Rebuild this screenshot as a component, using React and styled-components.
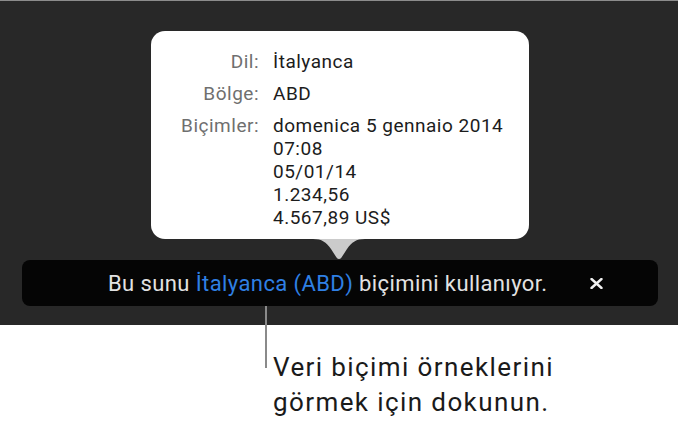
import styled, { createGlobalStyle } from "styled-components";

const GlobalStyle = createGlobalStyle`
  html, body {
    margin: 0;
    padding: 0;
    background: #ffffff;
  }
  body {
    font-family: Roboto, "Liberation Sans", sans-serif;
    -webkit-font-smoothing: antialiased;
  }
`;

const Page = styled.div`
  width: 678px;
  height: 423px;
  overflow: hidden;
  display: flex;
  flex-direction: column;
`;

const Stage = styled.div`
  box-sizing: border-box;
  height: 325px;
  border-top: 1px solid #8c8c8c;
  background: #282828;
  padding: 30px 20px 0 22px;
  display: flex;
  flex-direction: column;
  align-items: center;
`;

const Popover = styled.div`
  box-sizing: border-box;
  width: 378px;
  height: 208px;
  background: #ffffff;
  border-radius: 14px;
  padding-top: 19px;
  display: grid;
  grid-template-columns: 108px 1fr;
  column-gap: 14px;
  row-gap: 9px;
  align-content: start;
  font-size: 19px;
  letter-spacing: 0.5px;
  line-height: 23px;
`;

const Label = styled.div`
  text-align: right;
  color: #6f6f6f;
`;

const Value = styled.div`
  color: #1c1c1c;
  display: flex;
  flex-direction: column;
`;

const Arrow = styled.svg`
  display: block;
  margin-left: -2px;
  flex-shrink: 0;
`;

const Banner = styled.div`
  box-sizing: border-box;
  align-self: stretch;
  height: 46px;
  background: #050505;
  border-radius: 8px;
  display: flex;
  align-items: center;
  padding-left: 86px;
  gap: 42px;
`;

const Message = styled.span`
  font-size: 22px;
  letter-spacing: 0.4px;
  color: #e2e2e2;
  white-space: nowrap;
`;

const Link = styled.span`
  color: #2f80e4;
`;

const CloseButton = styled.button`
  border: none;
  background: none;
  padding: 0;
  display: flex;
  align-items: center;
  cursor: pointer;
`;

const Annotation = styled.div`
  position: relative;
  padding: 25px 0 0 273px;
`;

const Leader = styled.div`
  position: absolute;
  left: 265px;
  top: -19px;
  width: 2px;
  height: 62px;
  background: #8a8a8a;
`;

const Caption = styled.p`
  margin: 0;
  font-size: 26px;
  letter-spacing: 1.4px;
  line-height: 35px;
  color: #1a1a1a;
  white-space: nowrap;
`;

const formats = [
  "domenica 5 gennaio 2014",
  "07:08",
  "05/01/14",
  "1.234,56",
  "4.567,89 US$",
];

export default function App() {
  return (
    <Page>
      <GlobalStyle />
      <Stage>
        <Popover>
          <Label>Dil:</Label>
          <Value>İtalyanca</Value>
          <Label>Bölge:</Label>
          <Value>ABD</Value>
          <Label>Biçimler:</Label>
          <Value>
            {formats.map((f) => (
              <span key={f}>{f}</span>
            ))}
          </Value>
        </Popover>
        <Arrow width="52" height="21" viewBox="0 0 52 21">
          <path
            d="M0 0 C9 0 13 3 18 10 L23.5 18.5 Q26 21.5 28.5 18.5 L34 10 C39 3 43 0 52 0 Z"
            fill="#cbcbcb"
          />
        </Arrow>
        <Banner>
          <Message>
            Bu sunu <Link>İtalyanca (ABD)</Link> biçimini kullanıyor.
          </Message>
          <CloseButton aria-label="Kapat">
            <svg width="13" height="11" viewBox="0 0 13 11">
              <path
                d="M1.5 1 L11.5 10 M11.5 1 L1.5 10"
                stroke="#f2f2f2"
                strokeWidth="2.4"
                strokeLinecap="round"
              />
            </svg>
          </CloseButton>
        </Banner>
      </Stage>
      <Annotation>
        <Leader />
        <Caption>
          Veri biçimi örneklerini
          <br />
          görmek için dokunun.
        </Caption>
      </Annotation>
    </Page>
  );
}
